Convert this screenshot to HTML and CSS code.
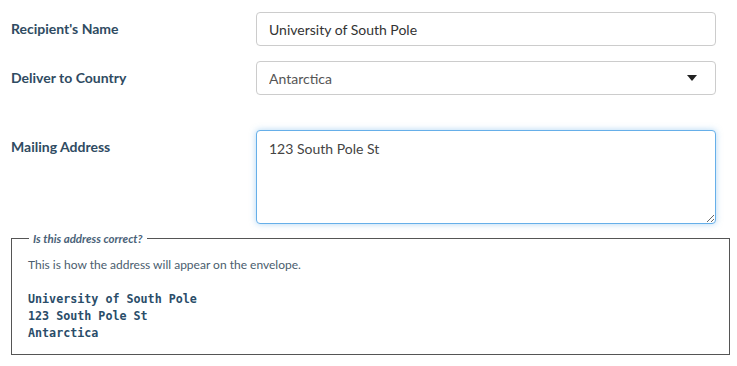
FILE: index.html
```html
<html>
	<head>
		<link rel="stylesheet" href="styles.css">
	</head>

	<body>

		<form class="Form">
			<div class="Row">
				<label class="Label" for="name">Recipient's Name</label>
				<input class="Field" id="name" type="text" value="University of South Pole">
			</div>
			<div class="Row">
				<label class="Label" for="country">Deliver to Country</label>
				<div class="SelectWrap">
					<select class="Field Select" id="country">
						<option>Antarctica</option>
					</select>
					<svg class="Arrow" width="10" height="6" viewBox="0 0 10 6"><path d="M0 0h10L5 6z" fill="#222"/></svg>
				</div>
			</div>
			<div class="Row Row--tall">
				<label class="Label" for="address">Mailing Address</label>
				<textarea class="Field Area" id="address">123 South Pole St</textarea>
			</div>

			<fieldset class="Preview">
				<legend>Is this address correct?</legend>
				<p class="Preview-note">This is how the address will appear on the envelope.</p>
				<pre class="Preview-address">University of South Pole
123 South Pole St
Antarctica</pre>
			</fieldset>
		</form>

		<script>
			const area = document.getElementById("address");
			area.focus();
			area.setSelectionRange(area.value.length, area.value.length);
		</script>

	</body>
</html>
```

FILE: styles.css
```css
body{
	margin: 0;
	background: #fff;
	font-family: Lato, "Open Sans", sans-serif;
	color: #34495e;
}
.Form{
	padding: 12px 7px 0 11px;
	margin: 0;
}
.Row{
	display: flex;
	align-items: flex-start;
	margin-bottom: 15px;
}
.Row--tall{
	margin-top: 35px;
	margin-bottom: 8px;
}
.Label{
	width: 245px;
	flex: none;
	font-weight: bold;
	font-size: 14px;
	line-height: 34px;
	color: #2f4b62;
}
.Field{
	box-sizing: border-box;
	width: 460px;
	height: 34px;
	margin: 0;
	padding: 0 12px;
	border: 1px solid #ccc;
	border-radius: 4px;
	background: #fff;
	font-family: Lato, "Open Sans", sans-serif;
	font-size: 14px;
	color: #333;
	outline: none;
}
.SelectWrap{
	position: relative;
}
.Select{
	appearance: none;
	-webkit-appearance: none;
	color: #555;
}
.Arrow{
	position: absolute;
	right: 19px;
	top: 14px;
}
.Area{
	height: 94px;
	padding: 8px 12px;
	line-height: 20px;
	border-color: #66afe9;
	box-shadow: 0 0 6px rgba(102, 175, 233, 0.5);
	resize: vertical;
	color: #444;
}
.Preview{
	margin: 0;
	padding: 8px 16px 12px 16px;
	border: 1px solid #555;
}
.Preview legend{
	margin-left: 1px;
	padding: 0 4px;
	font-size: 11.5px;
	font-style: italic;
	font-weight: bold;
	color: #4a6278;
}
.Preview-note{
	margin: 4px 0 19px 0;
	font-size: 12px;
	color: #4a5d6e;
}
.Preview-address{
	margin: 0;
	font-family: "DejaVu Sans Mono", monospace;
	font-weight: bold;
	font-size: 11.7px;
	line-height: 17px;
	color: #2a4d69;
}
```
